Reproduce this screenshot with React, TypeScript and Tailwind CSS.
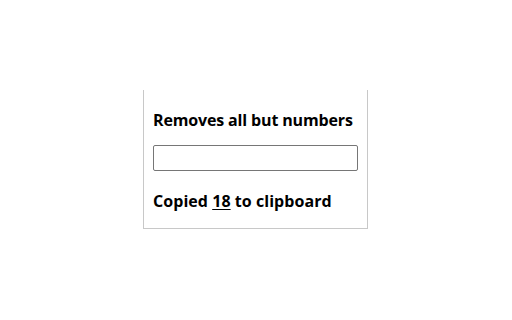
export default function App() {
  return (
    <div className="w-[512px] h-[320px] bg-white pt-[90px] pl-[143px]">
      <div
        className="w-[225px] h-[139px] border-x border-b border-[#c8c8c8] pl-[9px] pr-[10px] pt-[19px] text-black"
        style={{ fontFamily: '"Open Sans", "Noto Sans", sans-serif' }}
      >
        <h1 className="text-[16px] font-bold leading-[22px] tracking-[-0.15px]">Removes all but numbers</h1>
        <input
          type="text"
          className="mt-[14px] block w-[205px] h-[26px] border border-[#767676] rounded-[2px] bg-white"
        />
        <p className="mt-[19px] text-[16px] font-bold leading-[22px] tracking-[0.05px]">
          Copied <span className="underline underline-offset-2">18</span> to clipboard
        </p>
      </div>
    </div>
  );
}
